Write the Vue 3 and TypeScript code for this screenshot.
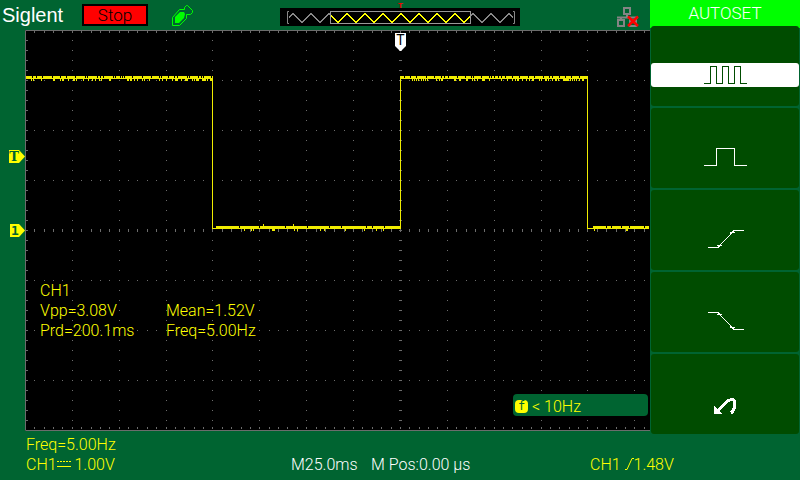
<script setup lang="ts">
interface MenuItem {
  label: string
  path: string
  kind: 'line' | 'arrow'
}

const menu: MenuItem[] = [
  { label: 'Multi-cycle', kind: 'line', path: 'M3 20.5H9.5V3.5H15.5V20.5H21.5V3.5H27.5V20.5H33.5V3.5H39.5V20.5H46' },
  { label: 'Single cycle', kind: 'line', path: 'M3 20.5H15.5V3.5H33.5V20.5H46' },
  { label: 'Rising edge', kind: 'line', path: 'M7 20.5H17L33 3.5H43M16 18.5H21M29 5.5H34' },
  { label: 'Falling edge', kind: 'line', path: 'M7 3.5H17L33 20.5H43M16 5.5H21M29 18.5H34' },
  { label: 'Undo', kind: 'arrow', path: 'M16 21L25 11.5Q28 8.5 30.5 8.5Q33.5 8.5 33.5 12V15Q33.5 19 30 22' },
]

// Horizontal positions of the minor divisions, snapped to whole pixels
const minor: number[] = []
for (let k = 1; k < 67; k++) minor.push(Math.ceil(25 + k * 9.375 - 0.5))
const major = minor.filter((_, i) => (i + 1) % 5 === 0)
const rows: number[] = []
for (let y = 40; y < 430; y += 10) rows.push(y)

const px = (x: number, y: number, w: number, h: number): string => `M${x} ${y}h${w}v${h}h${-w}z`

let grid = ''
for (const x of minor) {
  grid += px(x, 31, 1, 2) + px(x, 427, 1, 2) + px(x, 229, 1, 3)
  for (let y = 80; y < 430; y += 50) grid += px(x, y, 1, 1)
}
for (const y of rows) {
  grid += px(26, y, 2, 1) + px(399, y, 3, 1)
  for (const x of major) grid += px(x, y, 1, 1)
}

// Trace: flat levels with sampling noise around them
let seed = 7
const rand = (): number => {
  seed = (seed * 1103515245 + 12345) % 2147483648
  return seed / 2147483648
}
function level(from: number, to: number, base: number, gap: number, below: number, above: number): string {
  let d = px(from, base, to - from, 1)
  let x = from
  while (x < to) {
    const run = Math.min(1 + Math.floor(rand() * gap), to - x)
    d += px(x, base - 2, run, 2)
    x += run + 1
  }
  for (let i = from; i < to; i++) {
    const r = rand()
    if (r < below) d += px(i, base + 1, 1, 2)
    else if (r > 1 - above) d += px(i, base - 4, 1, 2)
  }
  return d
}
const trace =
  level(26, 212, 78, 9, 0.26, 0) +
  level(401, 587, 78, 9, 0.26, 0) +
  level(216, 400, 228, 30, 0.05, 0.03) +
  level(593, 649, 228, 16, 0.05, 0.05) +
  px(212, 76, 1, 153) + px(400, 76, 1, 153) + px(587, 76, 1, 153) +
  px(212, 228, 4, 1) + px(587, 228, 6, 1)

// Memory overview: triangle wave with an 18 px period and peaks at x = 13 + 18n
const waveY = (x: number): number => 22.5 - Math.abs(((x + 5) % 18) - 9)
function triangle(from: number, to: number): string {
  const xs = [from]
  for (let x = 4; x < to; x += 9) if (x > from) xs.push(x)
  xs.push(to)
  return 'M' + xs.map((x) => `${x} ${waveY(x)}`).join('L')
}
const overviewSides = triangle(9, 50) + triangle(191, 233)
const overviewMid = triangle(51, 190)
</script>

<template>
  <main class="scope">
    <header class="top">
      <span class="brand">Siglent</span>
      <span class="state">Stop</span>
      <svg class="usb" width="22" height="22" viewBox="0 0 22 22" aria-hidden="true">
        <path d="M.5 20.5V12.5L7.5 4.5H12.5V2.5L14.5 .5H15.5L20.5 5.5V7.5L18.5 9.5H14.5V13.5L7.5 20.5Z" fill="none" stroke="#0f0" />
        <path d="M3 12L8 7H12L13 9L12 13L7 18H3Z" fill="#0f0" />
      </svg>
      <svg class="overview" width="240" height="26" viewBox="0 0 240 26" aria-hidden="true">
        <rect y="8" width="240" height="18" />
        <path d="M9 11.5H7.5V23.5H9M233 11.5H234.5V23.5H233" fill="none" stroke="#888" />
        <path :d="overviewSides" fill="none" stroke="#888" shape-rendering="crispEdges" />
        <path :d="overviewMid" fill="none" stroke="#ff0" shape-rendering="crispEdges" />
        <rect x="50.5" y="11.5" width="140" height="12" fill="none" stroke="#999" />
        <text x="120.5" y="8" class="pos">T</text>
      </svg>
      <svg class="lan" width="22" height="20" viewBox="0 0 22 20" aria-hidden="true">
        <path d="M7 1H13V7H7ZM10 8V10M0 10.5H21M1 13H7V19H1ZM13 13H19V19H13ZM4 11V13" fill="none" stroke="#848484" stroke-width="2" />
        <path d="M11 9.5L21 19M21 9.5L11 19" stroke="#f00" stroke-width="2.5" />
      </svg>
    </header>

    <section class="plot">
      <svg class="screen" viewBox="0 30 650 401" role="img" aria-label="Channel 1 waveform">
        <rect x="25" y="30" width="625" height="401" />
        <path d="M650 30.5H25.5V430.5H650" fill="none" stroke="#6c6c6c" />
        <path :d="grid" fill="#6c6c6c" shape-rendering="crispEdges" />
        <path :d="trace" fill="#f0ec00" shape-rendering="crispEdges" />
        <path d="M395 33H406V46L401 51H400L395 46Z" fill="#fff" />
        <text x="400.5" y="45" class="trig">T</text>
        <path d="M9 150H19L25 156.5L19 163H9Z" fill="#ff0" />
        <text x="14" y="161" class="tag serif">T</text>
        <path d="M10 224H19L25 230.5L19 237H10Z" fill="#ff0" />
        <text x="15" y="235" class="tag">1</text>
      </svg>
      <dl class="measures">
        <dt>CH1</dt>
        <dd>Vpp=3.08V</dd>
        <dd>Mean=1.52V</dd>
        <dd>Prd=200.1ms</dd>
        <dd>Freq=5.00Hz</dd>
      </dl>
      <div class="counter">
        <span class="f">f</span>
        <span>&lt; 10Hz</span>
      </div>
    </section>

    <nav class="menu" aria-label="Autoset">
      <h1>AUTOSET</h1>
      <button v-for="(item, i) in menu" :key="item.label" type="button" :aria-label="item.label" :class="{ on: i === 0 }">
        <span class="band">
          <svg width="48" height="24" viewBox="0 0 48 24" fill="none" stroke="currentColor" shape-rendering="crispEdges">
            <path :d="item.path" :stroke-width="item.kind === 'arrow' ? 3 : 1" />
            <path v-if="item.kind === 'arrow'" d="M13 15L21 23H13Z" fill="currentColor" stroke="none" />
          </svg>
        </span>
      </button>
    </nav>

    <footer class="status">
      <div class="yellow">
        <p>Freq=5.00Hz</p>
        <p>
          CH1<svg width="14" height="12" viewBox="0 0 14 12" aria-hidden="true">
            <path d="M0 3.5H14" stroke="#ff0" stroke-dasharray="2 1" />
            <path d="M0 8.5H14" stroke="#ff0" />
          </svg>
          1.00V
        </p>
      </div>
      <p>M25.0ms</p>
      <p>M Pos:0.00 µs</p>
      <p class="yellow">
        CH1
        <svg width="9" height="12" viewBox="0 0 9 12" aria-hidden="true">
          <path d="M0 11.5H2L7 .5H9" fill="none" stroke="#ff0" />
        </svg>1.48V
      </p>
    </footer>
  </main>
</template>

<style>
body {
  margin: 0;
  background: #006431;
}
</style>

<style scoped>
.scope {
  display: grid;
  grid-template-columns: minmax(0, 1fr) 150px;
  grid-template-rows: 30px auto auto;
  min-height: 100vh;
  align-content: start;
  background: #006431;
  color: #fff;
  font: 300 16px/20px Roboto, "Liberation Sans", sans-serif;
}
.top {
  display: flex;
  align-items: flex-start;
  padding: 0 11px 0 2px;
}
.brand {
  width: 80px;
  font: 20px/30px "Liberation Sans", sans-serif;
}
.state {
  box-sizing: border-box;
  width: 66px;
  height: 22px;
  margin-top: 4px;
  border: 2px solid #000;
  background: #f00;
  color: #000;
  font-size: 17px;
  line-height: 18px;
  text-align: center;
}
.usb {
  margin: 5px 0 0 24px;
}
.overview {
  margin-left: 86px;
}
.lan {
  margin: 7px 0 0 auto;
}
.pos {
  fill: #f00;
  font: bold 8px "Liberation Sans", sans-serif;
  text-anchor: middle;
}
.plot {
  display: grid;
  grid-column: 1;
  align-self: start;
}
.plot > * {
  grid-area: 1 / 1;
}
.screen {
  display: block;
  width: 100%;
  height: auto;
}
.trig {
  fill: #000;
  font: 14px Roboto, sans-serif;
  text-anchor: middle;
}
.tag {
  fill: #006431;
  font: bold 13px "DejaVu Sans Mono", monospace;
  text-anchor: middle;
}
.serif {
  font-family: "DejaVu Serif", serif;
}
.measures {
  display: grid;
  grid-template-columns: 126px auto;
  align-self: end;
  justify-self: start;
  margin: 0 0 90px 40px;
  color: #ff0;
}
.measures dt {
  grid-column: 1 / 3;
}
.measures dd {
  margin: 0;
}
.counter {
  display: flex;
  box-sizing: border-box;
  align-items: center;
  align-self: end;
  justify-self: end;
  gap: 4px;
  width: 135px;
  height: 22px;
  margin: 0 2px 15px 0;
  padding: 3px 2px 0;
  border-radius: 4px;
  background: #006431;
  color: #ff0;
}
.f {
  width: 13px;
  height: 13px;
  border-radius: 4px;
  background: #ff0;
  color: #006431;
  font: 12px/13px "DejaVu Sans Mono", monospace;
  text-align: center;
}
.menu {
  display: flex;
  grid-area: 1 / 2 / 3 / 3;
  flex-direction: column;
  gap: 2px;
}
.menu h1 {
  height: 28px;
  margin: 0 0 -4px;
  background: #0f0;
  font: inherit;
  font-size: 17px;
  line-height: 27px;
  text-align: center;
}
.menu button {
  display: block;
  height: 80px;
  margin: 0 1px;
  padding: 37px 0 0;
  border: 0;
  border-radius: 3px;
  background: #004c00;
  color: #fff;
}
.band {
  display: flex;
  height: 24px;
  margin-bottom: 19px;
  justify-content: center;
  border-radius: 3px;
}
.on .band {
  background: #fff;
  color: #004c00;
}
.status {
  display: grid;
  grid-column: 1 / 3;
  grid-template-columns: 265fr 80fr 219fr 210fr;
  align-items: end;
  padding: 1px 0 0 26px;
}
.status p {
  margin: 0;
}
.yellow {
  color: #ff0;
}
</style>
